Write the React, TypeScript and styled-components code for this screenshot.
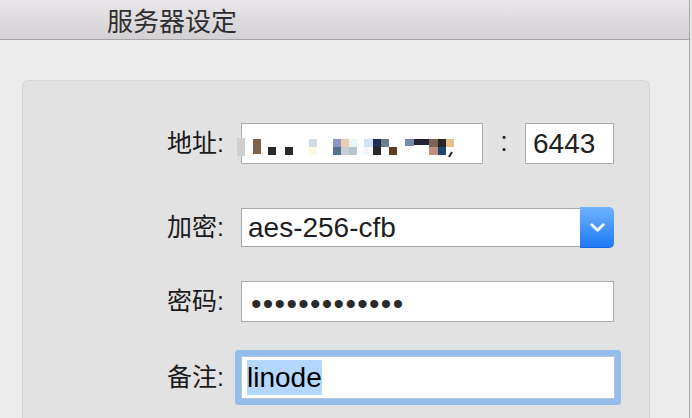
import React from "react";
import styled, { createGlobalStyle } from "styled-components";

const GlobalStyle = createGlobalStyle`
  html, body { margin: 0; padding: 0; }
  body {
    background: #e6e6e6;
    overflow: hidden;
    font-family: "Liberation Sans", "Noto Sans CJK SC", sans-serif;
  }
`;

const Window = styled.div`
  width: 689px;
  height: 418px;
  display: flex;
  flex-direction: column;
  background: #ececec;
  border-right: 1px solid #a9a9a9;
`;

const TitleBar = styled.div`
  height: 39px;
  flex: none;
  display: flex;
  align-items: center;
  padding-left: 107px;
  background: linear-gradient(#e9e7e9, #d2d0d2);
  border-bottom: 1px solid #a6a6a6;
  font-family: "Noto Sans CJK SC", sans-serif;
  font-size: 26px;
  line-height: 1;
  color: #2e2e2e;
`;

const Body = styled.div`
  flex: 1;
  display: flex;
  padding: 40px 39px 0 22px;
  min-height: 0;
`;

const Panel = styled.div`
  flex: 1;
  display: flex;
  flex-direction: column;
  background: #e2e2e2;
  border: 1px solid #d6d6d6;
  border-bottom: none;
  border-radius: 6px 6px 0 0;
  padding-top: 42px;
`;

const Row = styled.div<{ $top: number }>`
  display: flex;
  align-items: center;
  gap: 17px;
  margin-top: ${(p) => p.$top}px;
`;

const Label = styled.div`
  width: 201px;
  text-align: right;
  font-family: "Liberation Sans", "Noto Sans CJK SC", sans-serif;
  font-size: 25px;
  color: #1a1a1a;
  line-height: 1;
`;

const Field = styled.div<{ $w: number; $h?: number }>`
  position: relative;
  box-sizing: border-box;
  width: ${(p) => p.$w}px;
  height: ${(p) => p.$h ?? 41}px;
  background: #fff;
  border: 1px solid #ababab;
  display: flex;
  align-items: center;
  padding-left: 7px;
  font-family: "Liberation Sans", sans-serif;
  font-size: 28px;
  color: #222;
`;

const PortGroup = styled.div`
  display: flex;
  align-items: center;
`;

const Colon = styled.div`
  width: 42px;
  text-align: center;
  font-size: 27px;
  line-height: 1;
  color: #222;
  padding-bottom: 3px;
`;

const Mosaic = styled.svg`
  position: absolute;
  left: -6px;
  top: -1px;
`;

const Select = styled.div`
  display: flex;
  width: 373px;
  height: 39px;
`;

const SelectValue = styled.div`
  flex: 1;
  box-sizing: border-box;
  background: #fff;
  border: 1px solid #a9a9a9;
  border-right: none;
  display: flex;
  align-items: center;
  padding-left: 6px;
  font-family: "Liberation Sans", sans-serif;
  font-size: 28px;
  color: #1f1f1f;
`;

const SelectButton = styled.div`
  width: 34px;
  margin: -1px 0;
  border-radius: 0 5px 5px 0;
  background: linear-gradient(#70b3fd, #1b79f7);
  display: flex;
  align-items: center;
  justify-content: center;
  box-shadow: inset 0 -1px 0 rgba(0, 60, 160, 0.25);
`;

const Dots = styled.span`
  font-size: 30px;
  letter-spacing: 1.3px;
  color: #2a2a2a;
  padding-top: 4px;
  margin-left: 2px;
`;

const FocusField = styled(Field)`
  height: 43px;
  border: 1px solid #b7c4d2;
  border-radius: 1px;
  box-shadow: 0 0 0 6px #94bdeb;
  padding-left: 5px;
  color: #000;
`;

const Selection = styled.span`
  background: #b3d7ff;
  line-height: 35px;
`;

type Block = [number, number, number, number, string];

const blocks: Block[] = [
  [236, 137, 8, 18, "#cfcfcf"],
  [252, 138, 8, 15, "#7f6249"],
  [267, 146, 8, 8, "#2a2a2a"],
  [284, 146, 8, 8, "#2a2a2a"],
  [308, 138, 8, 8, "#cfdde3"],
  [308, 146, 8, 8, "#fdf8e4"],
  [332, 138, 8, 8, "#8e93c8"],
  [332, 146, 8, 8, "#587189"],
  [340, 138, 8, 8, "#e9cfb0"],
  [340, 146, 8, 8, "#c8ced4"],
  [348, 138, 8, 8, "#e6f4fa"],
  [348, 146, 8, 8, "#b7c5cd"],
  [363, 138, 9, 8, "#cfe4f3"],
  [363, 146, 9, 8, "#f3f7fa"],
  [372, 138, 8, 8, "#222858"],
  [372, 146, 8, 8, "#262626"],
  [380, 138, 8, 8, "#6b808b"],
  [388, 146, 8, 8, "#5f3c1f"],
  [404, 138, 9, 7, "#7689ab"],
  [413, 138, 15, 6, "#232334"],
  [428, 138, 9, 8, "#7b6553"],
  [428, 146, 9, 8, "#c28f7e"],
  [437, 138, 8, 8, "#262626"],
  [437, 146, 8, 8, "#1f466f"],
  [445, 138, 8, 8, "#e1c48f"],
];

const ORIGIN_X = 235;
const ORIGIN_Y = 122;

export default function App() {
  return (
    <>
      <GlobalStyle />
      <Window>
        <TitleBar>服务器设定</TitleBar>
        <Body>
          <Panel>
            <Row $top={0}>
              <Label>地址:</Label>
              <PortGroup>
                <Field $w={242}>
                  <Mosaic width={230} height={42} viewBox="0 0 230 42">
                    {blocks.map(([x, y, w, h, c], i) => (
                      <rect key={i} x={x - ORIGIN_X} y={y - ORIGIN_Y} width={w} height={h} fill={c} />
                    ))}
                    <path
                      d={`M${451 - ORIGIN_X} ${151 - ORIGIN_Y} L${448 - ORIGIN_X} ${156 - ORIGIN_Y}`}
                      stroke="#222"
                      strokeWidth={2}
                    />
                  </Mosaic>
                </Field>
                <Colon>:</Colon>
                <Field $w={89}>6443</Field>
              </PortGroup>
            </Row>
            <Row $top={44}>
              <Label>加密:</Label>
              <Select>
                <SelectValue>aes-256-cfb</SelectValue>
                <SelectButton>
                  <svg width="15" height="10" viewBox="0 0 15 10">
                    <path d="M1.8 1.8 L7.5 7.3 L13.2 1.8" fill="none" stroke="#fff" strokeWidth="2.8" strokeLinecap="round" strokeLinejoin="round" />
                  </svg>
                </SelectButton>
              </Select>
            </Row>
            <Row $top={34}>
              <Label>密码:</Label>
              <Field $w={373}>
                <Dots>•••••••••••••</Dots>
              </Field>
            </Row>
            <Row $top={34}>
              <Label>备注:</Label>
              <FocusField $w={374} $h={43}>
                <Selection>linode</Selection>
              </FocusField>
            </Row>
          </Panel>
        </Body>
      </Window>
    </>
  );
}
